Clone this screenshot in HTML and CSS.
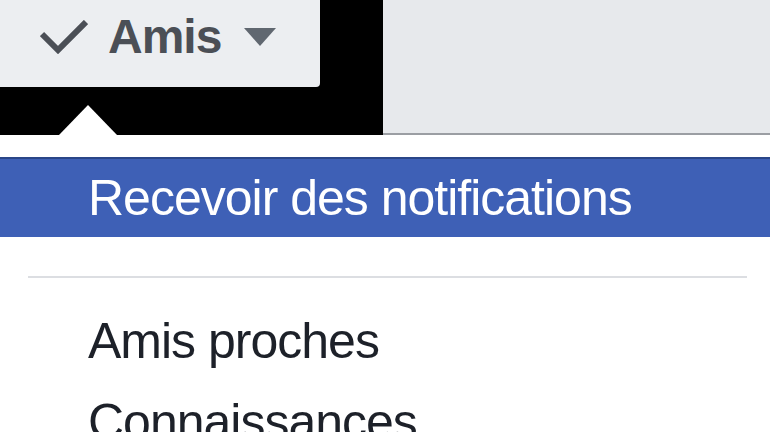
FILE: index.html
```html
<!DOCTYPE html>
<html lang="fr">
<head>
<meta charset="utf-8">
<title>Amis</title>
<link rel="stylesheet" href="styles.css">
</head>
<body>
<div class="page">
  <div class="topbar">
    <div class="dark-zone">
      <div class="friend-btn">
        <svg class="check" width="48" height="34" viewBox="0 0 48 34"><path d="M2 14 L18 30 L46 2" fill="none" stroke="#4b4f56" stroke-width="6"/></svg>
        <span class="btn-label">Amis</span>
        <span class="caret"></span>
      </div>
      <span class="notch"></span>
    </div>
    <div class="gray-zone"></div>
  </div>
  <div class="menu">
    <div class="item active">Recevoir des notifications</div>
    <div class="separator"></div>
    <div class="item">Amis proches</div>
    <div class="item">Connaissances</div>
  </div>
</div>
</body>
</html>
```
FILE: styles.css
```css
html, body {
  margin: 0;
  padding: 0;
  background: #ffffff;
}
.page {
  width: 770px;
  height: 432px;
  overflow: hidden;
  font-family: "Liberation Sans", Arial, sans-serif;
}
.topbar {
  display: flex;
  height: 135px;
}
.dark-zone {
  position: relative;
  width: 383px;
  background: #000000;
}
.friend-btn {
  display: flex;
  align-items: center;
  box-sizing: border-box;
  width: 320px;
  height: 87px;
  padding: 0 0 14px 40px;
  background: #eceef1;
  border-bottom-right-radius: 4px;
}
.check {
  display: block;
  flex: none;
}
.btn-label {
  margin-left: 20px;
  font-weight: bold;
  font-size: 48px;
  line-height: 60px;
  letter-spacing: -1px;
  color: #4b4f56;
}
.caret {
  margin-left: 23px;
  width: 0;
  height: 0;
  border-left: 16px solid transparent;
  border-right: 16px solid transparent;
  border-top: 18px solid #606770;
}
.notch {
  position: absolute;
  left: 59px;
  top: 105px;
  width: 0;
  height: 0;
  border-left: 29px solid transparent;
  border-right: 29px solid transparent;
  border-bottom: 30px solid #ffffff;
}
.gray-zone {
  flex: 1;
  background: #e7e9ec;
  border-bottom: 2px solid #9b9ea3;
}
.menu {
  padding-top: 22px;
  background: #ffffff;
}
.item {
  padding-left: 88px;
  font-size: 50px;
  line-height: 81px;
  letter-spacing: -1px;
  color: #1d2129;
  white-space: nowrap;
}
.item.active {
  line-height: 78px;
  background: #3e60b6;
  border-top: 2px solid #2a4688;
  color: #ffffff;
}
.separator {
  height: 2px;
  margin: 39px 23px 23px 28px;
  background: #dcdee2;
}
```
